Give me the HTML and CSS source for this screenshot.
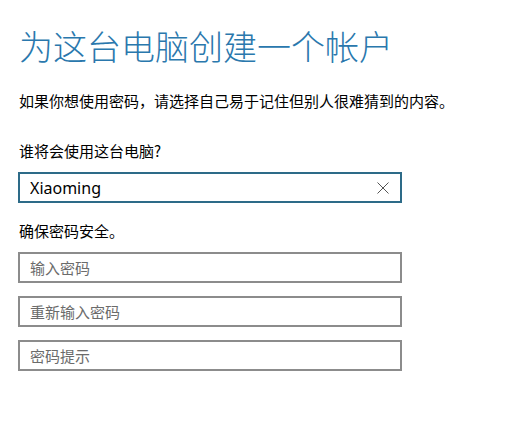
FILE: index.html
```html
<!DOCTYPE html>
<html lang="zh-CN">
<head>
    <meta charset="UTF-8">
    <meta name="viewport" content="width=device-width, initial-scale=1.0">
    <title>为这台电脑创建一个帐户</title>
    <link rel="stylesheet" href="styles.css">
</head>
<body>

    <div class="page">
        <h1 class="title">为这台电脑创建一个帐户</h1>
        <p class="intro">如果你想使用密码，请选择自己易于记住但别人很难猜到的内容。</p>

        <form class="account-form">
            <label class="label" for="userName">谁将会使用这台电脑?</label>
            <div class="field field-active">
                <input type="text" id="userName" value="Xiaoming">
                <span class="clear-btn">
                    <svg width="12" height="12" viewBox="0 0 12 12">
                        <path d="M0.5 0.5 L11.5 11.5 M11.5 0.5 L0.5 11.5" stroke="#555" stroke-width="1" fill="none"/>
                    </svg>
                </span>
            </div>

            <label class="label label-secure">确保密码安全。</label>
            <div class="field-list">
                <div class="field"><input type="password" placeholder="输入密码"></div>
                <div class="field"><input type="password" placeholder="重新输入密码"></div>
                <div class="field"><input type="text" placeholder="密码提示"></div>
            </div>
        </form>
    </div>

</body>
</html>
```

FILE: styles.css
```css
body {
    margin: 0;
    background-color: #fff;
    font-family: "Noto Sans CJK SC", "Noto Sans", sans-serif;
    color: #000;
}

.page {
    padding: 24px 0 0 18px;
}

.title {
    margin: 0 0 0 1px;
    font-size: 34px;
    font-weight: 300;
    line-height: 44px;
    color: #2a78ad;
}

.intro {
    margin: 23px 0 0 1px;
    font-size: 15px;
    line-height: 20px;
}

.account-form {
    display: flex;
    flex-direction: column;
}

.label {
    margin: 30px 0 0 1px;
    font-size: 15px;
    line-height: 20px;
}

.label-secure {
    margin-top: 18px;
}

.field {
    display: flex;
    align-items: center;
    width: 384px;
    height: 31px;
    box-sizing: border-box;
    border: 2px solid #8c8c8c;
    background-color: #fff;
}

.field-active {
    margin-top: 11px;
    border-color: #2d6b88;
}

.field input {
    flex: 1;
    min-width: 0;
    height: 100%;
    padding: 0 10px;
    border: none;
    outline: none;
    background: transparent;
    font-family: "Noto Sans", "Noto Sans CJK SC", sans-serif;
    font-size: 16px;
    color: #000;
}

.field input::placeholder {
    font-family: "Noto Sans CJK SC", sans-serif;
    font-size: 15px;
    color: #6b6b6b;
}

.clear-btn {
    display: flex;
    width: 12px;
    height: 12px;
    margin-right: 11px;
}

.field-list {
    display: flex;
    flex-direction: column;
    gap: 13px;
    margin-top: 11px;
}
```
